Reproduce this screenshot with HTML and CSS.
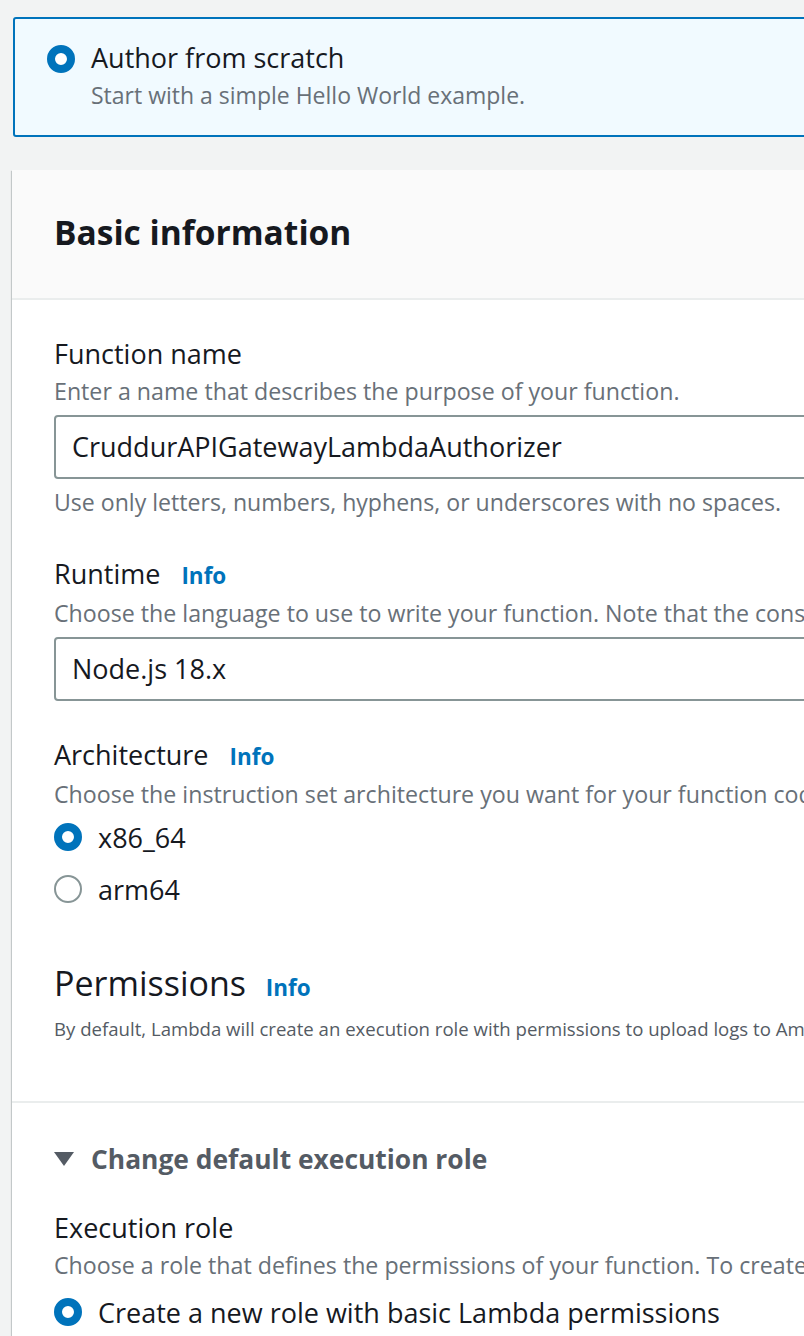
FILE: index.html
```html
<!DOCTYPE html>
<html>
<head>
<meta charset="utf-8">
<link rel="stylesheet" href="styles.css">
</head>
<body>
<div class="page">
  <div class="tile">
    <span class="radio radio-on"></span>
    <div class="tile-text">
      <div class="tile-title">Author from scratch</div>
      <div class="tile-sub">Start with a simple Hello World example.</div>
    </div>
  </div>

  <div class="card">
    <div class="card-header">
      <h2 class="card-title">Basic information</h2>
    </div>
    <div class="card-body">
      <div class="field">
        <div class="label">Function name</div>
        <div class="desc">Enter a name that describes the purpose of your function.</div>
        <div class="input">CruddurAPIGatewayLambdaAuthorizer</div>
        <div class="constraint">Use only letters, numbers, hyphens, or underscores with no spaces.</div>
      </div>

      <div class="field">
        <div class="label">Runtime <span class="info">Info</span></div>
        <div class="desc">Choose the language to use to write your function. Note that the console code editor supports only Node.js, Python, and Ruby.</div>
        <div class="input">Node.js 18.x</div>
      </div>

      <div class="field">
        <div class="label">Architecture <span class="info">Info</span></div>
        <div class="desc">Choose the instruction set architecture you want for your function code.</div>
        <div class="radio-row"><span class="radio radio-on"></span><span class="radio-label">x86_64</span></div>
        <div class="radio-row"><span class="radio"></span><span class="radio-label">arm64</span></div>
      </div>

      <div class="perm">
        <h3 class="perm-title">Permissions <span class="info info-lg">Info</span></h3>
        <div class="perm-desc">By default, Lambda will create an execution role with permissions to upload logs to Amazon CloudWatch Logs. You can customize this default role later when adding triggers.</div>
      </div>
    </div>

    <div class="expand">
      <div class="expand-head">
        <svg class="caret" width="20" height="14" viewBox="0 0 20 14"><polygon points="0,0 20,0 10,14" fill="#545b64"/></svg>
        <span class="expand-title">Change default execution role</span>
      </div>
      <div class="field">
        <div class="label">Execution role</div>
        <div class="desc">Choose a role that defines the permissions of your function. To create a custom role, go to the IAM console.</div>
        <div class="radio-row"><span class="radio radio-on"></span><span class="radio-label">Create a new role with basic Lambda permissions</span></div>
      </div>
    </div>
  </div>
</div>
</body>
</html>
```

FILE: styles.css
```css
html, body {
  margin: 0;
  padding: 0;
  background: #f2f3f3;
  overflow: hidden;
  font-family: "Open Sans", "Noto Sans", sans-serif;
  color: #16191f;
}

.page {
  width: 900px;
  padding-top: 17px;
}

.tile {
  margin-left: 13px;
  border: 2px solid #0073bb;
  border-radius: 3px;
  background: #f1faff;
  padding: 21px 0 21px 32px;
  display: flex;
  align-items: flex-start;
  gap: 16px;
}

.tile-text {
  display: flex;
  flex-direction: column;
}

.tile-title {
  font-size: 27px;
  line-height: 36px;
  color: #16191f;
}

.tile-sub {
  font-size: 23px;
  line-height: 38px;
  color: #687078;
}

.tile .radio {
  margin-top: 5px;
}

.radio {
  box-sizing: border-box;
  width: 28px;
  height: 28px;
  border-radius: 50%;
  border: 2px solid #879596;
  background: #fff;
  flex: none;
  display: inline-block;
}

.radio-on {
  border: 8px solid #0073bb;
}

.card {
  margin-top: 33px;
  margin-left: 12px;
  background: #fff;
  box-shadow: 0 1px 1px 0 rgba(0, 28, 36, 0.3), 1px 1px 1px 0 rgba(0, 28, 36, 0.15), -1px 1px 1px 0 rgba(0, 28, 36, 0.15);
}

.card-header {
  background: #fafafa;
  border-bottom: 2px solid #eaeded;
  padding: 40px 42px 44px;
}

.card-title {
  margin: 0;
  font-size: 33.5px;
  line-height: 44px;
  font-weight: 700;
}

.card-body {
  padding: 35px 42px 58px;
  border-bottom: 2px solid #eaeded;
}

.field + .field {
  margin-top: 35px;
}

.label {
  font-size: 27px;
  line-height: 38px;
  color: #16191f;
}

.info {
  color: #0073bb;
  font-weight: 700;
  font-size: 22.5px;
  margin-left: 14px;
}

.desc {
  font-size: 23.2px;
  line-height: 36px;
  color: #687078;
  white-space: nowrap;
}

.input {
  margin-top: 6px;
  box-sizing: border-box;
  height: 64px;
  border: 2px solid #879596;
  border-radius: 4px;
  padding: 0 16px;
  font-size: 27px;
  line-height: 60px;
  color: #16191f;
}

.constraint {
  margin-top: 5px;
  font-size: 23.1px;
  line-height: 36px;
  color: #687078;
}

.radio-row {
  display: flex;
  align-items: center;
  gap: 16px;
  height: 52px;
}

.field .desc + .radio-row {
  margin-top: -1px;
}

.radio-label {
  font-size: 27px;
  color: #16191f;
}

.perm {
  margin-top: 44px;
}

.perm-title {
  margin: 0;
  font-size: 34px;
  line-height: 48px;
  font-weight: 400;
}

.info-lg {
  font-size: 22.5px;
  margin-left: 11px;
}

.perm-desc {
  margin-top: 3px;
  font-size: 18.6px;
  line-height: 28px;
  color: #545b64;
  white-space: nowrap;
}

.expand {
  padding: 36px 42px 0;
}

.expand-head {
  display: flex;
  align-items: center;
  gap: 17px;
  height: 40px;
}

.caret {
  flex: none;
}

.expand-title {
  font-size: 26.4px;
  font-weight: 700;
  color: #545b64;
}

.expand .field {
  margin-top: 30px;
}

.expand .desc + .radio-row {
  margin-top: 3px;
}
```
